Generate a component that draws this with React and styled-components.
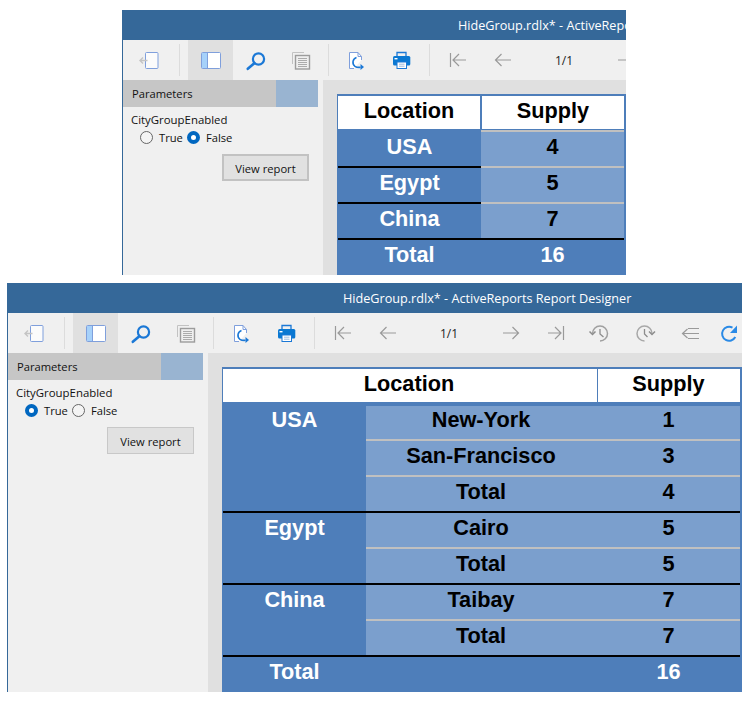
import React from "react";
import styled, { createGlobalStyle } from "styled-components";

const Global = createGlobalStyle`
  html, body { margin: 0; padding: 0; background: #fff; }
  body { font-family: "Open Sans", "Noto Sans", sans-serif; font-size: 11.2px; color: #111; }
`;

const Page = styled.div`
  width: 750px;
  height: 701px;
  padding-top: 10px;
  box-sizing: border-box;
  display: flex;
  flex-direction: column;
  gap: 8px;
  overflow: hidden;
`;

const Window = styled.section`
  margin-left: ${(p) => p.$left}px;
  width: ${(p) => p.$width}px;
  height: ${(p) => p.$height}px;
  box-sizing: border-box;
  border-left: 1px solid #356899;
  overflow: hidden;
  display: flex;
  flex-direction: column;
  background: #f0f0f0;
`;

const TitleBar = styled.header`
  flex: none;
  height: 30px;
  background: #356899;
  color: #fff;
  display: flex;
  align-items: center;
  padding-left: 335px;
  font-size: 12.65px;
  white-space: nowrap;
`;

const Toolbar = styled.nav`
  flex: none;
  height: 40px;
  padding-left: 3px;
  display: flex;
  align-items: stretch;
  background: #f0f0f0;
`;

const ToolButton = styled.div`
  flex: none;
  width: ${(p) => p.$w || 45}px;
  display: flex;
  align-items: center;
  justify-content: center;
  background: ${(p) => (p.$active ? "#e0e0e0" : "transparent")};
  svg { display: block; flex: none; }
`;

const Separator = styled.div`
  flex: none;
  width: 1px;
  margin: 4px ${(p) => p.$after}px 4px ${(p) => p.$before}px;
  background: #dcdcdc;
`;

const PageLabel = styled.div`
  flex: none;
  width: 78px;
  display: flex;
  align-items: center;
  justify-content: center;
  font-size: 12px;
  color: #222;
`;

const Body = styled.div`
  flex: 1;
  min-height: 0;
  display: flex;
`;

const Sidebar = styled.aside`
  flex: none;
  width: 200px;
  background: #f0f0f0;
`;

const ParamsHeader = styled.div`
  width: 195px;
  height: 27px;
  background: #c6c6c6;
  display: flex;
  align-items: center;
  justify-content: space-between;
  padding-left: 9px;
  box-sizing: border-box;
`;

const ParamsGrip = styled.div`
  width: 42px;
  height: 100%;
  background: #99b4d1;
`;

const ParamName = styled.div`
  margin: 5px 0 0 8px;
  line-height: 16px;
  font-size: 11.4px;
`;

const RadioRow = styled.div`
  margin: 2px 0 0 17px;
  height: 14px;
  display: flex;
  align-items: center;
`;

const RadioOption = styled.label`
  display: flex;
  align-items: center;
  gap: 6px;
  margin-right: 4px;
`;

const RadioMark = styled.span`
  width: 13px;
  height: 13px;
  box-sizing: border-box;
  border-radius: 50%;
  background: ${(p) => (p.$on ? "#fff" : "#f4f4f4")};
  border: ${(p) => (p.$on ? "4px solid #0067c0" : "1px solid #666")};
`;

const ViewButton = styled.div`
  margin: 10px 0 0 99px;
  width: 87px;
  height: 27px;
  padding-top: 1px;
  box-sizing: border-box;
  border: ${(p) => (p.$focus ? "2px solid #c2c2c2" : "1px solid #c8c8c8")};
  background: #e1e1e1;
  display: flex;
  align-items: center;
  justify-content: center;
`;

const Report = styled.main`
  flex: 1;
  min-width: 0;
  background: #e0e0e0;
  padding: 14px 0 0 14px;
`;

const Sheet = styled.div`
  box-sizing: border-box;
  border-top: 2px solid #4e7eba;
  border-left: 1px solid #4e7eba;
  border-right: 2px solid #4e7eba;
  background: #4e7eba;
  font-family: "Liberation Sans", Arial, sans-serif;
  font-weight: 700;
  font-size: 21.7px;
  text-align: center;
  height: 100%;
  overflow: hidden;
`;

const HeadRow = styled.div`
  display: flex;
  height: 33px;
  gap: ${(p) => p.$gap}px;
  margin-bottom: 1px;
`;

const HeadCell = styled.div`
  flex: ${(p) => (p.$w ? `0 0 ${p.$w}px` : "1")};
  box-sizing: border-box;
  padding-right: ${(p) => p.$nudge || 0}px;
  background: #fff;
  color: #000;
  line-height: 29px;
`;

const Group = styled.div`
  display: flex;
`;

const GroupName = styled.div`
  flex: 0 0 ${(p) => p.$w}px;
  box-sizing: border-box;
  border-top: 2px solid ${(p) => p.$line};
  color: #fff;
  line-height: 29px;
`;

const GroupRows = styled.div`
  flex: 1;
  min-width: 0;
`;

const Row = styled.div`
  height: 36px;
  box-sizing: border-box;
  background: #7b9fcd;
  border-top: ${(p) => p.$top || 2}px solid ${(p) => p.$line};
  display: flex;
  color: #000;
  line-height: ${(p) => (p.$top === 3 ? 27 : 30)}px;
`;

const City = styled.div`
  flex: 1;
  box-sizing: border-box;
  padding-right: ${(p) => p.$nudge || 0}px;
`;

const Value = styled.div`
  flex: 0 0 ${(p) => p.$w}px;
  box-sizing: border-box;
  padding-right: 1px;
`;

const TotalRow = styled.div`
  display: flex;
  height: 38px;
  box-sizing: border-box;
  border-top: 2px solid #000;
  color: #fff;
  line-height: 29px;
`;

const TotalLabel = styled.div`
  flex: 0 0 ${(p) => p.$w}px;
`;

const TotalGap = styled.div`
  flex: 1;
`;

const line = { fill: "none", stroke: "#9a9a9a", strokeWidth: 1.2 };

const Svg = ({ children }) => (
  <svg width="24" height="24" viewBox="0 0 24 24">
    {children}
  </svg>
);

const ExitIcon = () => (
  <Svg>
    <rect x="8.5" y="4.5" width="12.5" height="16" rx="1" fill="#fbfbfb" stroke="#7f9fdc" />
    <path d="M10.5 12.5H3M6 9.5l-3 3 3 3" fill="none" stroke="#c4c4c4" strokeWidth="1.4" />
  </Svg>
);

const PanelIcon = () => (
  <Svg>
    <rect x="2.5" y="4.5" width="19" height="16" rx="1" fill="#fff" stroke="#7f9fdc" />
    <rect x="3" y="5" width="5" height="15" fill="#a6d1fa" />
    <path d="M8.5 4.5v16" stroke="#7f9fdc" />
  </Svg>
);

const SearchIcon = () => (
  <Svg>
    <circle cx="14.5" cy="11" r="5.6" fill="none" stroke="#1b78d6" strokeWidth="2.2" />
    <path d="M10.3 15.2L3.8 20.8" stroke="#1b78d6" strokeWidth="2.6" strokeLinecap="round" />
  </Svg>
);

const PagesIcon = () => (
  <Svg>
    <path d="M3.5 16V4.5H15" fill="none" stroke="#c2c2c2" />
    <rect x="6.5" y="7.5" width="14" height="13.5" fill="#efefef" stroke="#9c9c9c" strokeWidth="1.4" />
    <path d="M9 10.5h9M9 12.5h9M9 14.5h9M9 16.5h9M9 18.5h9" stroke="#ababab" />
  </Svg>
);

const ReloadPageIcon = () => (
  <Svg>
    <path d="M10 20.5H5.5v-16H14l3.5 4V12" fill="#fff" stroke="#7f9fdc" />
    <path d="M14 4.5v4h3.5" fill="none" stroke="#7f9fdc" />
    <path d="M12.5 9.5a5 5 0 0 0-1.5 8.8c1.5 1 3.5 1.2 5.5 1" fill="none" stroke="#1b78d6" strokeWidth="1.6" />
    <path d="M16.5 16l3.5 3-3.5 3z" fill="#1b78d6" />
  </Svg>
);

const PrintIcon = () => (
  <Svg>
    <path d="M8 8V4.5h9V8" fill="none" stroke="#1b78d6" strokeWidth="1.3" />
    <rect x="4" y="8" width="17.3" height="9.5" rx="1.5" fill="#0a78d2" />
    <rect x="5.5" y="10" width="3" height="1.4" fill="#fff" />
    <rect x="8" y="14" width="9.5" height="6.5" fill="#fff" stroke="#1b78d6" />
    <path d="M10 16.2h5.5M10 18.2h5.5" stroke="#9ab8dc" />
  </Svg>
);

const FirstIcon = () => (
  <Svg>
    <path d="M4.5 5v14M20 12H7M13 6l-6 6 6 6" {...line} />
  </Svg>
);

const PrevIcon = () => (
  <Svg>
    <path d="M20 12H4.5M10.5 6l-6 6 6 6" {...line} />
  </Svg>
);

const NextIcon = () => (
  <Svg>
    <path d="M4 12h15.5M13.5 6l6 6-6 6" {...line} />
  </Svg>
);

const LastIcon = () => (
  <Svg>
    <path d="M19.5 5v14M4 12h13M11 6l6 6-6 6" {...line} />
  </Svg>
);

const BackHistoryIcon = () => (
  <Svg>
    <path d="M5.5 12.5A7.5 7.5 0 1 1 13 20" fill="none" stroke="#a0a0a0" strokeWidth="1.5" />
    <path d="M2.5 10.5l3 3 3-3" fill="none" stroke="#8c8c8c" strokeWidth="1.5" />
    <path d="M13 8v5l3.5 3" fill="none" stroke="#8c8c8c" strokeWidth="1.3" />
  </Svg>
);

const ForwardHistoryIcon = () => (
  <Svg>
    <path d="M19 12.5A7.5 7.5 0 1 0 11.5 20" fill="none" stroke="#a8a8a8" strokeWidth="1.5" />
    <path d="M16 10.5l3 3 3-3" fill="none" stroke="#8c8c8c" strokeWidth="1.5" />
    <path d="M11.5 8v5l3 3" fill="none" stroke="#8c8c8c" strokeWidth="1.3" />
  </Svg>
);

const OutlineBackIcon = () => (
  <Svg>
    <path d="M21 7.5H10M21 12.5H4.5M21 17.5H10M9.5 8l-5 4.5 5 4.5" {...line} />
  </Svg>
);

const RefreshIcon = () => (
  <Svg>
    <path d="M18.3 16A7 7 0 1 1 15.5 6.6" fill="none" stroke="#2a8ae6" strokeWidth="2" />
    <path d="M20 4.5V12h-7z" fill="#2a8ae6" />
  </Svg>
);

const Tools = () => (
  <Toolbar>
    <ToolButton><ExitIcon /></ToolButton>
    <Separator $before={8} $after={8} />
    <ToolButton $active><PanelIcon /></ToolButton>
    <ToolButton><SearchIcon /></ToolButton>
    <ToolButton><PagesIcon /></ToolButton>
    <Separator $before={5} $after={4} />
    <ToolButton><ReloadPageIcon /></ToolButton>
    <ToolButton><PrintIcon /></ToolButton>
    <Separator $before={6} $after={5} />
    <ToolButton><FirstIcon /></ToolButton>
    <ToolButton><PrevIcon /></ToolButton>
    <PageLabel>1/1</PageLabel>
    <ToolButton><NextIcon /></ToolButton>
    <ToolButton><LastIcon /></ToolButton>
    <ToolButton $w={41}><BackHistoryIcon /></ToolButton>
    <ToolButton $w={51}><ForwardHistoryIcon /></ToolButton>
    <ToolButton $w={40}><OutlineBackIcon /></ToolButton>
    <ToolButton $w={37}><RefreshIcon /></ToolButton>
  </Toolbar>
);

const Params = ({ value, focus }) => (
  <Sidebar>
    <ParamsHeader>
      Parameters
      <ParamsGrip />
    </ParamsHeader>
    <ParamName>CityGroupEnabled</ParamName>
    <RadioRow>
      <RadioOption><RadioMark $on={value} />True</RadioOption>
      <RadioOption><RadioMark $on={!value} />False</RadioOption>
    </RadioRow>
    <ViewButton $focus={focus}>View report</ViewButton>
  </Sidebar>
);

const Frame = ({ left, width, height, value, focus, children }) => (
  <Window $left={left} $width={width} $height={height}>
    <TitleBar>HideGroup.rdlx* - ActiveReports Report Designer</TitleBar>
    <Tools />
    <Body>
      <Params value={value} focus={focus} />
      <Report>{children}</Report>
    </Body>
  </Window>
);

const summary = [
  { name: "USA", total: 4 },
  { name: "Egypt", total: 5 },
  { name: "China", total: 7 },
];

const detail = [
  { name: "USA", rows: [["New-York", 1], ["San-Francisco", 3], ["Total", 4]] },
  { name: "Egypt", rows: [["Cairo", 5], ["Total", 5]] },
  { name: "China", rows: [["Taibay", 7], ["Total", 7]] },
];

const DARK = "#4e7eba";
const GRAY = "#c0c0c0";

export default function App() {
  return (
    <Page>
      <Global />
      <Frame left={122} width={504} height={265} value={false} focus>
        <Sheet>
          <HeadRow $gap={2}>
            <HeadCell $w={142}>Location</HeadCell>
            <HeadCell>Supply</HeadCell>
          </HeadRow>
          {summary.map((g, i) => (
            <Group key={g.name}>
              <GroupName $w={143} $line={i === 0 ? DARK : "#000"}>{g.name}</GroupName>
              <GroupRows>
                <Row $line={GRAY}>
                  <City>{g.total}</City>
                </Row>
              </GroupRows>
            </Group>
          ))}
          <TotalRow>
            <TotalLabel $w={143}>Total</TotalLabel>
            <TotalGap>16</TotalGap>
          </TotalRow>
        </Sheet>
      </Frame>
      <Frame left={7} width={735} height={409} value>
        <Sheet>
          <HeadRow $gap={1}>
            <HeadCell $nudge={2}>Location</HeadCell>
            <HeadCell $w={142} $nudge={1}>Supply</HeadCell>
          </HeadRow>
          {detail.map((g, i) => (
            <Group key={g.name}>
              <GroupName $w={143} $line={i === 0 ? DARK : "#000"}>{g.name}</GroupName>
              <GroupRows>
                {g.rows.map(([city, supply], j) => (
                  <Row
                    key={city}
                    $top={i === 0 && j === 0 ? 3 : 2}
                    $line={j > 0 ? GRAY : i === 0 ? DARK : "#000"}
                  >
                    <City $nudge={2}>{city}</City>
                    <Value $w={142}>{supply}</Value>
                  </Row>
                ))}
              </GroupRows>
            </Group>
          ))}
          <TotalRow>
            <TotalLabel $w={143}>Total</TotalLabel>
            <TotalGap />
            <Value $w={142}>16</Value>
          </TotalRow>
        </Sheet>
      </Frame>
    </Page>
  );
}
